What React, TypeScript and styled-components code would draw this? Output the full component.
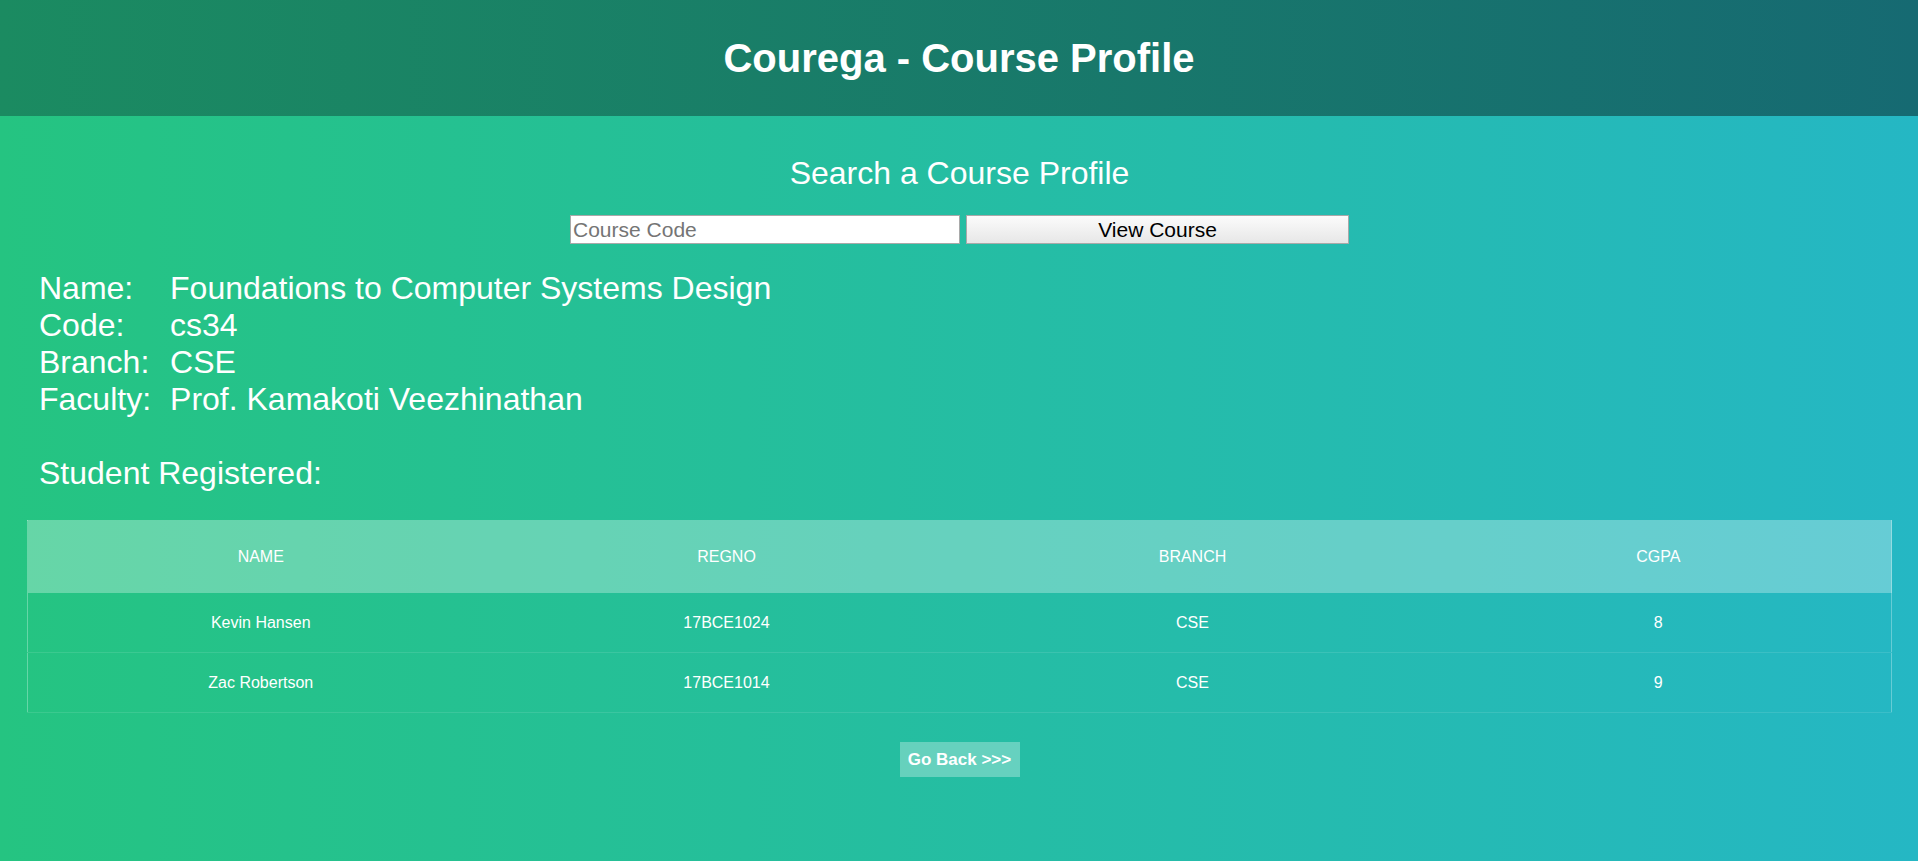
import { Fragment } from 'react';
import styled, { createGlobalStyle } from 'styled-components';

interface Student {
  name: string;
  regno: string;
  branch: string;
  cgpa: number;
}

const students: Student[] = [
  { name: 'Kevin Hansen', regno: '17BCE1024', branch: 'CSE', cgpa: 8 },
  { name: 'Zac Robertson', regno: '17BCE1014', branch: 'CSE', cgpa: 9 },
];

const details: [string, string][] = [
  ['Name:', 'Foundations to Computer Systems Design'],
  ['Code:', 'cs34'],
  ['Branch:', 'CSE'],
  ['Faculty:', 'Prof. Kamakoti Veezhinathan'],
];

const GlobalStyle = createGlobalStyle`
  html, body {
    margin: 0;
    padding: 0;
  }

  body {
    min-height: 100vh;
    font-family: 'Liberation Sans', Arial, sans-serif;
    color: #fff;
    background: linear-gradient(to right, #25c481, #25b7c4);
  }
`;

const Page = styled.div`
  min-height: 100vh;
  display: flex;
  flex-direction: column;
`;

const Header = styled.header`
  height: 116px;
  display: flex;
  align-items: center;
  justify-content: center;
  background: linear-gradient(to right, #1b8b61, #166a72);
`;

const Title = styled.h1`
  margin: 0;
  font-size: 40px;
  font-weight: 700;
  color: #fff;
`;

const Main = styled.main`
  padding: 0 26px 40px 27px;
`;

const SearchTitle = styled.h2`
  margin: 39px 0 0;
  font-size: 32px;
  font-weight: 400;
  line-height: 37px;
  text-align: center;
`;

const SearchForm = styled.form`
  display: flex;
  justify-content: center;
  gap: 6px;
  margin-top: 23px;
`;

const CodeInput = styled.input`
  box-sizing: border-box;
  width: 390px;
  height: 29px;
  padding: 1px 2px;
  border: 1px solid #a9a9a9;
  background: #fff;
  font-family: 'Liberation Sans', Arial, sans-serif;
  font-size: 21px;
  color: #222;

  &::placeholder {
    color: #757575;
  }
`;

const ViewButton = styled.button`
  box-sizing: border-box;
  width: 383px;
  height: 29px;
  padding: 0;
  border: 1px solid #a9a9a9;
  background: linear-gradient(to bottom, #fbfbfb, #e7e7e7);
  font-family: 'Liberation Sans', Arial, sans-serif;
  font-size: 21px;
  color: #000;
`;

const Details = styled.div`
  display: grid;
  grid-template-columns: auto 1fr;
  column-gap: 19px;
  margin-top: 26px;
  padding-left: 12px;
  font-size: 32px;
  line-height: 37px;
`;

const SubTitle = styled.div`
  margin-top: 37px;
  padding-left: 12px;
  font-size: 32px;
  line-height: 37px;
`;

const Table = styled.table`
  width: 100%;
  margin-top: 28px;
  border-collapse: collapse;
  table-layout: fixed;
  border: 1px solid rgba(255, 255, 255, 0.3);
`;

const HeadRow = styled.tr`
  background-color: rgba(255, 255, 255, 0.3);
`;

const Th = styled.th`
  height: 72px;
  padding: 0 15px;
  font-size: 16px;
  font-weight: 400;
  text-transform: uppercase;
  text-align: center;
  color: #fff;
`;

const Td = styled.td`
  height: 59px;
  padding: 0 15px;
  font-size: 16px;
  text-align: center;
  color: #fff;
  border-bottom: 1px solid rgba(255, 255, 255, 0.1);
`;

const Footer = styled.div`
  display: flex;
  justify-content: center;
  margin-top: 29px;
`;

const BackButton = styled.a`
  display: block;
  box-sizing: border-box;
  width: 120px;
  height: 35px;
  line-height: 35px;
  text-align: center;
  background-color: rgba(255, 255, 255, 0.3);
  font-size: 17px;
  font-weight: 700;
  color: #fff;
  text-decoration: none;
`;

export default function App() {
  return (
    <Page>
      <GlobalStyle />
      <Header>
        <Title>Courega - Course Profile</Title>
      </Header>
      <Main>
        <SearchTitle>Search a Course Profile</SearchTitle>
        <SearchForm onSubmit={(e) => e.preventDefault()}>
          <CodeInput placeholder="Course Code" />
          <ViewButton type="submit">View Course</ViewButton>
        </SearchForm>
        <Details>
          {details.map(([label, value]) => (
            <Fragment key={label}>
              <span>{label}</span>
              <span>{value}</span>
            </Fragment>
          ))}
        </Details>
        <SubTitle>Student Registered:</SubTitle>
        <Table>
          <thead>
            <HeadRow>
              <Th>Name</Th>
              <Th>Regno</Th>
              <Th>Branch</Th>
              <Th>CGPA</Th>
            </HeadRow>
          </thead>
          <tbody>
            {students.map((s) => (
              <tr key={s.regno}>
                <Td>{s.name}</Td>
                <Td>{s.regno}</Td>
                <Td>{s.branch}</Td>
                <Td>{s.cgpa}</Td>
              </tr>
            ))}
          </tbody>
        </Table>
        <Footer>
          <BackButton href="#">Go Back &gt;&gt;&gt;</BackButton>
        </Footer>
      </Main>
    </Page>
  );
}
